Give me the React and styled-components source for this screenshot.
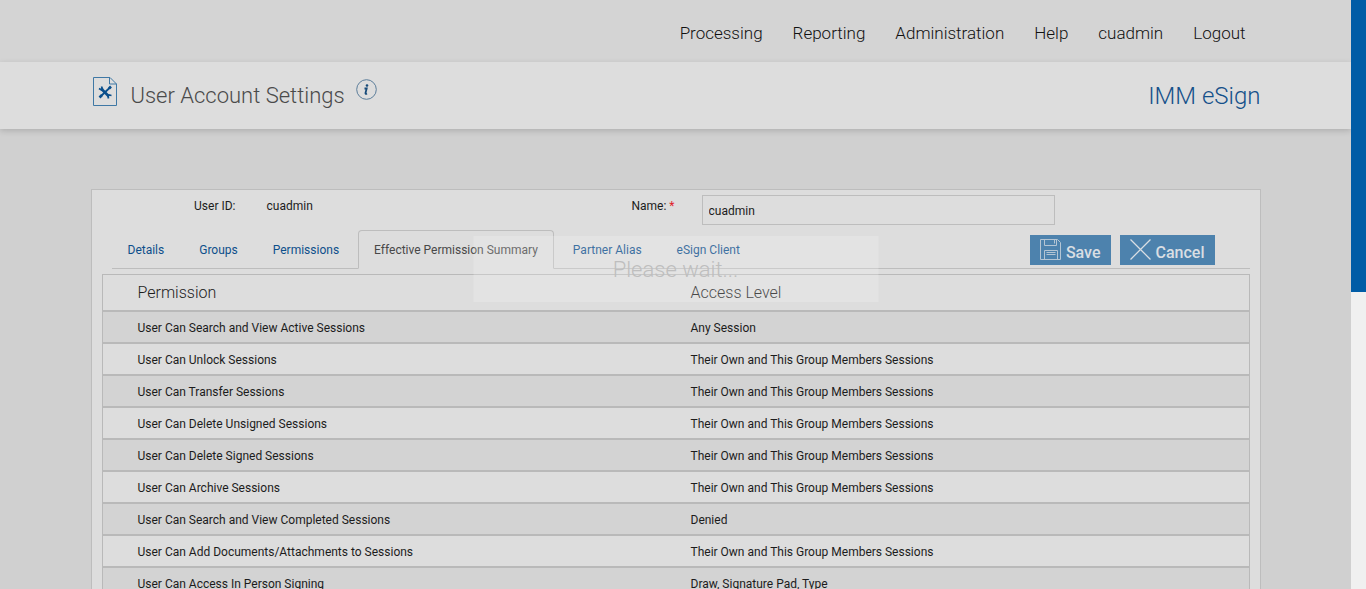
import React from 'react';
import styled, { createGlobalStyle, css } from 'styled-components';

const GlobalStyle = createGlobalStyle`
  *, *::before, *::after { box-sizing: border-box; }
  body {
    margin: 0;
    background: #d0d0d0;
    color: #1c1c1c;
    font: 400 12px/18px Roboto, "Liberation Sans", sans-serif;
  }
`;

const Shell = styled.div`
  display: flex;
  height: 100vh;
`;

const Page = styled.div`
  position: relative;
  flex: 1;
  min-width: 0;
  overflow: hidden;
`;

const ScrollRail = styled.div`
  flex: 0 0 15px;
  background: #f0f0f0;
`;

const ScrollThumb = styled.div`
  height: 292px;
  background: #005ca6;
`;

const Container = styled.div`
  width: 100%;
  max-width: 1170px;
  margin: 0 auto;
`;

const TopBar = styled.header`
  background: #d4d4d4;
`;

const TopNav = styled.nav`
  display: flex;
  justify-content: flex-end;
  gap: 30px;
  max-width: 1170px;
  margin: 0 auto;
  padding: 21px 15px 17px;
`;

const TopLink = styled.a`
  color: #111;
  font-size: 17px;
  font-weight: 300;
  line-height: 24px;
  text-decoration: none;
`;

const TitleBar = styled.div`
  background: #ddd;
  box-shadow: 0 2px 6px rgba(0, 0, 0, 0.16);
`;

const TitleInner = styled(Container)`
  display: flex;
  align-items: center;
  height: 67px;
`;

const PageTitle = styled.h1`
  margin: 0 11px 0 14px;
  color: #4a4a4a;
  font-size: 22px;
  font-weight: 300;
  line-height: 30px;
`;

const InfoButton = styled.button`
  display: flex;
  width: 21px;
  height: 21px;
  margin-bottom: 12px;
  padding: 0;
  border: 0;
  background: none;
`;

const Brand = styled.div`
  margin-left: auto;
  color: #14508a;
  font-size: 24px;
  font-weight: 300;
  line-height: 30px;
`;

const Card = styled.main`
  width: 100%;
  max-width: 1170px;
  margin: 60px auto 0;
  padding-top: 5px;
  border: 1px solid #bdbdbd;
  background: #ddd;
`;

const UserForm = styled.form`
  display: grid;
  grid-template-columns: 144px 1fr auto 353px;
  padding-right: 205px;
`;

const FieldLabel = styled.label`
  padding-top: 2px;
  text-align: right;
`;

const NameLabel = styled(FieldLabel)`
  padding-right: 27px;
`;

const FieldValue = styled.output`
  padding: 2px 0 0 31px;
`;

const Required = styled.span`
  color: #e0202a;
`;

const NameInput = styled.input`
  width: 100%;
  height: 30px;
  padding: 2px 6px 0;
  border: 1px solid #bdbdbd;
  background: #ddd;
  color: #1c1c1c;
  font: inherit;
`;

const TabBar = styled.div`
  display: flex;
  align-items: flex-start;
  margin: 5px 10px 0 20px;
  padding-right: 35px;
  border-bottom: 1px solid #bdbdbd;
`;

const TabList = styled.div`
  display: flex;
  gap: 3px;
  margin-bottom: -1px;
`;

const Tab = styled.button`
  height: 39px;
  padding: 0 15px;
  border: 1px solid transparent;
  border-radius: 4px 4px 0 0;
  background: none;
  color: #0d4f8b;
  font: inherit;
  white-space: nowrap;
  ${({ $active }) => $active && css`
    border-color: #bdbdbd;
    border-bottom-color: #ddd;
    background: #ddd;
    color: #484848;
  `}
`;

const Actions = styled.div`
  display: flex;
  gap: 9px;
  margin: 5px 0 3px auto;
`;

const ActionButton = styled.button`
  display: flex;
  align-items: center;
  gap: 4px;
  height: 30px;
  padding: 0 10px;
  border: 0;
  background: #4d82ad;
  color: #d9dee3;
  font: 500 16px/20px Roboto, sans-serif;

  svg { flex: none; }
  span { padding-top: 5px; }
`;

const PermissionTable = styled.table`
  width: calc(100% - 20px);
  margin: 5px 10px 0;
  border: 1px solid #b9b9b9;
  border-spacing: 0;
  border-collapse: separate;
  table-layout: fixed;
`;

const HeadCell = styled.th`
  width: ${({ $width }) => $width};
  height: 35px;
  padding: 0 0 0 35px;
  font-size: 16px;
  font-weight: 300;
  text-align: left;
`;

const Row = styled.tr`
  &:nth-child(odd) { background: #d3d3d3; }
`;

const Cell = styled.td`
  height: 32px;
  padding: 2px 0 0 35px;
  border-top: 2px solid #b9b9b9;
`;

const WaitOverlay = styled.div`
  position: absolute;
  top: 236px;
  left: 50%;
  width: 405px;
  height: 66px;
  transform: translateX(-50%);
  background: rgba(255, 255, 255, 0.2);
  color: #bebebe;
  font-size: 22px;
  font-weight: 300;
  line-height: 68px;
  text-align: center;
`;

const navItems = ['Processing', 'Reporting', 'Administration', 'Help', 'cuadmin', 'Logout'];

const tabs = [
  'Details',
  'Groups',
  'Permissions',
  'Effective Permission Summary',
  'Partner Alias',
  'eSign Client',
];

const GROUP = 'Their Own and This Group Members Sessions';

const permissions = [
  ['User Can Search and View Active Sessions', 'Any Session'],
  ['User Can Unlock Sessions', GROUP],
  ['User Can Transfer Sessions', GROUP],
  ['User Can Delete Unsigned Sessions', GROUP],
  ['User Can Delete Signed Sessions', GROUP],
  ['User Can Archive Sessions', GROUP],
  ['User Can Search and View Completed Sessions', 'Denied'],
  ['User Can Add Documents/Attachments to Sessions', GROUP],
  ['User Can Access In Person Signing', 'Draw, Signature Pad, Type'],
];

const SettingsIcon = styled.svg`
  margin: 0 0 9px 2px;
`;

function SettingsGlyph() {
  return (
    <SettingsIcon width="24" height="29" viewBox="0 0 24 29" fill="none" aria-hidden="true">
      <path d="M.5.500H17l6.500 6.500v21.500H.5z" stroke="#3f78a5" />
      <path d="M16.500.500v6.500h7" stroke="#3f78a5" />
      <g stroke="#0a4f8c">
        <path d="M8 11.500l8 8" strokeWidth="2.600" />
        <path d="M17 10.500l-9.500 9" strokeWidth="1.800" />
        <path d="M6 11.500l2.500 1.500 1-1-1-2.500M15.500 21.500l-.5-2.500 1-1 2.500.5" strokeWidth="1.700" />
        <path d="M16 11.500l2-2M6.500 20.500l2.500-2.500" strokeWidth="2.600" />
      </g>
    </SettingsIcon>
  );
}

function InfoGlyph() {
  return (
    <svg width="21" height="21" viewBox="0 0 21 21" fill="none" aria-hidden="true">
      <circle cx="10.500" cy="10.500" r="9.800" stroke="#5b7d9a" />
      <circle cx="11" cy="6.500" r="1.300" fill="#174b7a" />
      <path d="M8.500 9.500h2.200l-1.200 4.500q-.3 1.500 1.500.5" stroke="#174b7a" strokeWidth="1.800" />
    </svg>
  );
}

function SaveGlyph() {
  return (
    <svg width="22" height="22" viewBox="0 0 22 22" fill="none" stroke="#b4c5d4" aria-hidden="true">
      <path d="M.5.500h17l3 3v17H.5z" />
      <path d="M4.500.500v6h12v-6M14.500.500v4M4.500 20.500v-9h13v9M6.500 13.500h9M6.500 15.500h9" />
    </svg>
  );
}

function CancelGlyph() {
  return (
    <svg width="22" height="22" viewBox="0 0 22 22" fill="none" stroke="#d9dee3" strokeWidth="1.300" aria-hidden="true">
      <path d="M.5.500l20 20M20.500.500l-20 20" />
    </svg>
  );
}

export default function App() {
  return (
    <Shell>
      <GlobalStyle />
      <Page>
        <TopBar>
          <TopNav>
            {navItems.map((item) => (
              <TopLink key={item} href="#">{item}</TopLink>
            ))}
          </TopNav>
        </TopBar>
        <TitleBar>
          <TitleInner>
            <SettingsGlyph />
            <PageTitle>User Account Settings</PageTitle>
            <InfoButton type="button" aria-label="Information"><InfoGlyph /></InfoButton>
            <Brand>IMM eSign</Brand>
          </TitleInner>
        </TitleBar>
        <Card>
          <UserForm>
            <FieldLabel htmlFor="user-id">User ID:</FieldLabel>
            <FieldValue id="user-id">cuadmin</FieldValue>
            <NameLabel htmlFor="name">Name: <Required>*</Required></NameLabel>
            <NameInput id="name" type="text" defaultValue="cuadmin" />
          </UserForm>
          <TabBar>
            <TabList role="tablist">
              {tabs.map((tab, i) => (
                <Tab key={tab} type="button" role="tab" aria-selected={i === 3} $active={i === 3}>
                  {tab}
                </Tab>
              ))}
            </TabList>
            <Actions>
              <ActionButton type="button"><SaveGlyph /><span>Save</span></ActionButton>
              <ActionButton type="button"><CancelGlyph /><span>Cancel</span></ActionButton>
            </Actions>
          </TabBar>
          <PermissionTable>
            <thead>
              <tr>
                <HeadCell $width="553px">Permission</HeadCell>
                <HeadCell>Access Level</HeadCell>
              </tr>
            </thead>
            <tbody>
              {permissions.map(([name, level]) => (
                <Row key={name}>
                  <Cell>{name}</Cell>
                  <Cell>{level}</Cell>
                </Row>
              ))}
            </tbody>
          </PermissionTable>
        </Card>
        <WaitOverlay role="status">Please wait...</WaitOverlay>
      </Page>
      <ScrollRail><ScrollThumb /></ScrollRail>
    </Shell>
  );
}
